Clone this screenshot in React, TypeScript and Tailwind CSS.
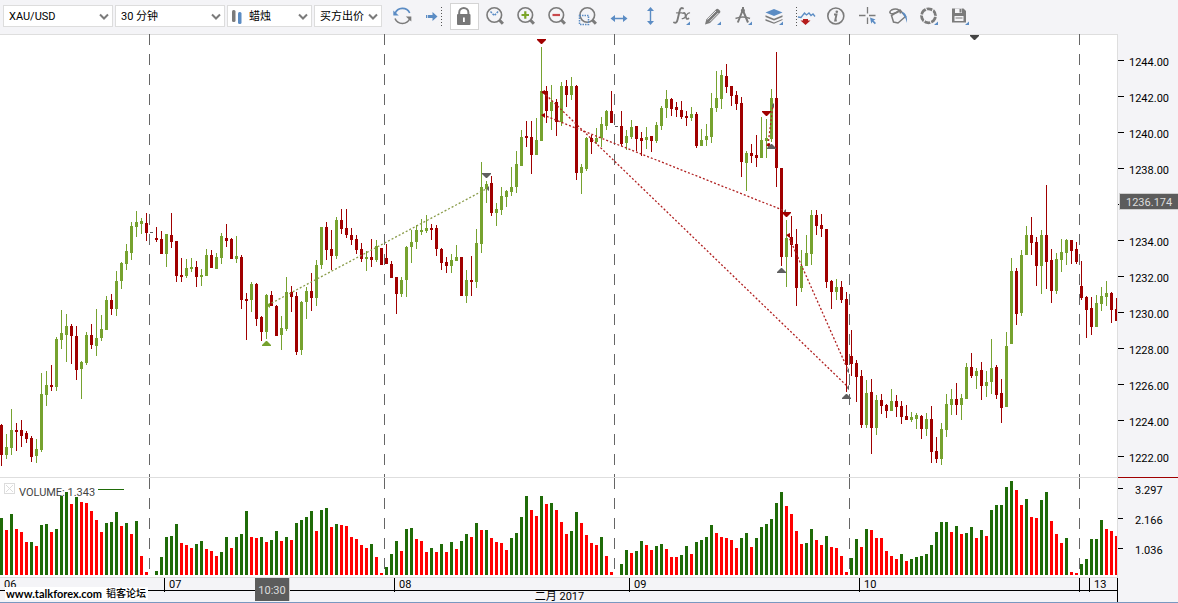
import React from "react";

/* One entry per bar: direction, then high, body top, body bottom and low as plot ordinates. "-" is a gap. */
const CANDLES = `
r424,425,455,466 g434,447,455,459 g409,430,448,455 r423,430,432,451 r420,430,436,447 r431,433,439,443 r436,438,457,462 g439,449,456,463 g373,394,450,452 g371,385,395,406
r365,385,387,391 g337,339,387,391 g310,333,340,349 g314,326,335,362 r324,326,336,364 r326,336,370,380 g361,362,369,399 g332,335,363,365 r324,335,345,349 g309,338,346,356
g315,329,338,341 g296,300,330,330 r294,300,309,315 g271,281,309,316 g262,263,281,289 g244,251,264,270 g222,226,253,260 g211,222,227,237 g218,221,224,234 r213,223,233,241
- r227,238,240,242 r231,239,254,254 g234,234,254,267 r213,235,242,248 r241,241,276,282 r258,275,277,282 g259,268,276,278 g258,267,269,272 r261,267,277,287
g269,275,277,286 g249,255,276,276 r250,255,268,268 g253,257,269,269 g233,236,258,264 r224,238,241,247 r238,239,259,259 g236,256,259,263 r255,257,300,309 r293,299,301,340
g282,284,300,312 r283,284,319,326 r316,317,332,341 g294,295,332,339 r291,295,306,306 r305,306,336,336 g316,328,335,350 g277,292,329,331 r286,292,297,312 r292,296,352,355
g301,302,350,355 g287,291,302,319 r273,291,298,311 g260,265,298,306 g227,227,265,269 r222,227,250,260 r230,249,256,270 g217,220,256,259 r209,220,229,234 r209,228,235,238
r228,235,240,245 r235,239,250,254 r243,249,259,262 g251,257,259,271 r239,257,260,267 g240,246,260,262 r248,248,265,265 r244,258,264,264 r261,264,278,278 r277,277,294,314
g277,280,294,297 g246,247,280,297 g230,242,247,263 g225,230,242,249 g219,230,232,235 g215,228,231,233 r224,228,230,240 r225,228,249,256 r248,249,263,270 r257,262,266,273
g254,260,266,273 g245,257,261,261 r257,257,296,296 g270,280,296,303 r256,280,282,296 g229,243,282,288 g162,187,244,253 g181,184,189,203 r176,183,213,216 g203,209,213,226
g187,196,210,215 g190,191,197,207 g167,187,192,196 g151,164,187,193 g130,137,166,166 r121,136,138,147 r121,137,155,174 g118,140,155,155 g47,91,141,141 r86,91,111,123
g85,102,111,130 r99,102,122,136 g82,86,122,126 r80,86,95,107 g77,86,95,100 r85,86,173,180 g164,167,173,194 g137,138,169,171 r135,138,142,154 g128,138,142,144
g117,124,138,147 g110,111,126,130 r91,111,123,123 - r111,126,144,146 g130,136,143,150 g120,127,137,139 r126,126,139,151 r132,138,141,156 g127,137,140,149
r136,136,141,152 g122,125,141,143 g106,108,126,130 g90,99,108,118 r98,99,109,116 r102,107,110,117 r101,110,117,119 r111,116,118,126 g107,114,118,121 r112,114,146,148
g129,140,146,146 g124,136,140,146 g93,108,137,143 g71,98,108,112 g70,75,99,109 r64,76,87,93 r86,86,96,106 r91,95,104,110 r97,103,162,177 g151,153,163,191
r144,153,156,163 r135,155,158,167 g117,140,158,158 g119,138,141,158 g89,98,139,142 r52,98,168,187 r168,168,257,266 g220,238,257,287 r216,237,245,257 r229,244,288,306
g250,266,288,292 g235,253,266,266 g210,215,254,265 r210,215,226,235 r214,225,229,237 r229,229,282,288 r280,281,292,309 g279,287,292,300 r281,287,300,303 r292,299,365,392
r330,356,364,376 r360,363,377,402 r370,376,425,428 g380,393,425,428 r379,392,428,454 g395,400,428,435 r394,400,406,414 r404,405,411,418 g389,401,411,411 r395,401,407,417
r401,406,417,424 r405,416,420,420 g412,417,420,422 g413,415,419,429 r415,416,429,439 g413,419,429,436 r406,419,452,463 r437,451,459,463 g423,429,459,465 g394,404,430,437
g389,399,405,415 r383,399,405,415 g394,398,405,420 g363,367,399,399 r353,367,376,378 g368,371,376,389 r362,370,386,400 g371,382,386,397 g339,368,382,394 r365,367,395,399
r379,393,408,423 g332,346,407,407 g258,271,344,344 r268,271,314,325 g250,255,313,316 g226,235,255,255 r217,235,243,255 r237,242,266,286 g230,235,266,294 r185,235,262,289
r249,260,291,303 g253,259,291,294 g239,252,260,272 g239,240,253,265 r240,240,251,264 r242,249,262,264 r261,286,298,300 r296,297,310,338 r297,308,327,335 g295,303,327,327
g287,296,304,311 g281,293,297,306 r292,293,310,323 r298,309,321,321`
  .trim()
  .split(/\s+/);

/* Volume bar heights, one per candle. */
const VOLUMES = `
g57 r45 g61 r46 r43 r33 g33 r29 g50 g51 r43 g46 g79 g83 r71 g78 r73 r72 r64 r55
r43 g52 g53 g63 r49 g52 r41 g54 r19 r3 - g4 g18 g38 g39 g51 r32 r30 r27 g31
g34 r26 r24 r19 g23 g38 r27 g38 g41 g64 r38 r37 g38 r33 g35 g44 r34 g38 r35 g52
g55 g58 g64 r44 g65 g67 r48 g51 r50 r49 r38 r36 r30 r27 g31 r18 r2 g8 g21 g34
r24 g46 g47 r36 r34 r23 g27 r23 g31 r23 g33 r26 g34 g41 r38 g52 r45 g45 r37 r33
r32 r25 g37 g42 g58 g79 r65 r59 g79 r71 g72 r65 r53 r41 g44 g63 r52 r40 r32 r30
g38 r19 r3 - g11 g25 r22 g24 g34 r30 r25 g29 g31 r26 r18 r18 g20 g29 r21 g33
g35 g38 g50 r42 r38 r37 r35 r27 g37 g42 r28 g37 g48 g51 g56 g72 g83 r69 r61 r44
r31 g32 g46 r35 r30 g39 r28 r27 r19 r3 g17 g36 r28 g46 r45 r37 r37 r24 r19 r16
g21 r14 g16 g18 g19 g21 g30 g43 g53 g53 r43 g49 r41 g42 g48 r37 g45 r39 g65 g70
g70 g88 g94 r85 r70 g76 r58 r57 g75 g83 r54 r41 r32 g37 r3 r2 g11 g16 g36 g36
g55 r46 r44 r39`
  .trim()
  .split(/\s+/);

const SESSIONS = [149, 384, 614, 849, 1079];
const GREEN = "#76a22f";
const RED = "#a00000";
const GRAY = "#5f5f5f";
const BLUE = "#5b8cc4";
const INK = "#7b7b7b";

type Mark = { x: number; y: number; up?: boolean; color: string };

const MARKS: Mark[] = [
  { x: 541, y: 39, color: RED },
  { x: 486, y: 173, color: GRAY },
  { x: 766, y: 111, color: RED },
  { x: 771, y: 144, up: true, color: GRAY },
  { x: 786, y: 212, color: RED },
  { x: 781, y: 268, up: true, color: GRAY },
  { x: 846, y: 394, up: true, color: GRAY },
  { x: 266, y: 341, up: true, color: GREEN },
  { x: 974, y: 35, color: "#444444" },
];

const TRADES = [
  { from: [268, 305], to: [488, 188], color: "#8a9c4a", start: GREEN },
  { from: [543, 92], to: [848, 387], color: "#b02020", start: RED },
  { from: [543, 115], to: [785, 211], color: "#b02020", start: RED },
  { from: [768, 145], to: [773, 105], color: "#b02020", start: RED },
  { from: [788, 235], to: [848, 370], color: "#b02020", start: RED },
];

function Sessions({ top, bottom }: { top: number; bottom: number }) {
  return (
    <g stroke="#666666" strokeDasharray="11 9" shapeRendering="crispEdges">
      {SESSIONS.map((x) => (
        <line key={x} x1={x + 0.5} x2={x + 0.5} y1={top} y2={bottom} />
      ))}
    </g>
  );
}

function PricePlot() {
  return (
    <svg className="block h-[443px] w-full" viewBox="0 34 1117 443" preserveAspectRatio="none" role="img" aria-label="XAU/USD">
      <rect x="0" y="34" width="1117" height="1" fill="#dedede" />
      <Sessions top={34} bottom={477} />
      <g shapeRendering="crispEdges">
        {CANDLES.map((c, i) => {
          if (c === "-") return null;
          const [hi, top, bottom, lo] = c.slice(1).split(",").map(Number);
          const fill = c[0] === "g" ? GREEN : RED;
          return (
            <g key={i} fill={fill}>
              <rect x={5 * i + 1} y={hi} width="1" height={lo - hi} />
              <rect x={5 * i} y={top} width="3" height={bottom - top} />
            </g>
          );
        })}
        <g fill={GRAY}>
          <rect x="150" y="232" width="3" height="1" />
          <rect x="615" y="126" width="3" height="1" />
          <rect x="850" y="398" width="1" height="1" />
        </g>
      </g>
      {TRADES.map((t, i) => (
        <g key={i}>
          <line x1={t.from[0]} y1={t.from[1]} x2={t.to[0]} y2={t.to[1]} stroke={t.color} strokeWidth="1.3" strokeDasharray="2 2" />
          <path d={`M${t.from[0] + 2} ${t.from[1] - 2}l-4 2l4 3z`} fill={t.start} />
          <path d={`M${t.to[0] + 1} ${t.to[1] - 2}v5q-4 -2 0 -5z`} fill={GRAY} />
        </g>
      ))}
      {MARKS.map((m) => (
        <path
          key={`${m.x}-${m.y}`}
          fill={m.color}
          d={m.up ? `M${m.x - 4} ${m.y + 5}h9v-1l-4 -4h-1l-4 4z` : `M${m.x - 4} ${m.y}h9v1l-4 4h-1l-4 -4z`}
        />
      ))}
    </svg>
  );
}

function VolumePlot() {
  return (
    <svg className="block h-[99px] w-full" viewBox="0 478 1117 99" preserveAspectRatio="none" role="img" aria-label="VOLUME">
      <Sessions top={478} bottom={575} />
      <g shapeRendering="crispEdges">
        {VOLUMES.map((v, i) => {
          if (v === "-") return null;
          const h = Number(v.slice(1));
          return <rect key={i} x={5 * i} y={575 - h} width="3" height={h} fill={v[0] === "g" ? "#1f6b08" : "#ff0000"} />;
        })}
      </g>
    </svg>
  );
}

function Picker({ label, value, className, selectClass, children }: { label: string; value: string; className: string; selectClass: string; children?: React.ReactNode }) {
  return (
    <label className={`relative block h-[22px] ${className}`}>
      <select aria-label={label} defaultValue={value} className={`block h-full w-full appearance-none border border-[#dddddd] bg-white pt-0.5 text-[11px] leading-4 text-black outline-none ${selectClass}`}>
        <option>{value}</option>
      </select>
      {children}
      <svg className="pointer-events-none absolute top-2 right-1 h-2 w-2.5" viewBox="0 0 10 8" fill="none" stroke={INK} strokeWidth="2">
        <path d="M1 1.5l4 4l4 -4" />
      </svg>
    </label>
  );
}

const corner = <path d="M24 21.5v3.5h-4z" fill={BLUE} />;

function Lens({ x = 14.3 }: { x?: number }) {
  return (
    <g fill="none" stroke={INK}>
      <circle cx={x} cy="15" r="7.3" strokeWidth="1.6" />
      <path d={`M${x + 5} 20l3.6 3.8`} strokeWidth="3" />
    </g>
  );
}

const TOOLS: { label: string; pressed?: boolean; art: React.ReactNode }[] = [
  {
    label: "Refresh",
    art: (
      <g fill="none" strokeWidth="1.6">
        <path d="M8 13.5A8 8 0 0 1 22.7 13" stroke={BLUE} />
        <path d="M6.3 10.5v5h5.5z" fill={BLUE} />
        <path d="M22.8 18.5A8 8 0 0 1 8 18.5" stroke={INK} />
        <path d="M24.3 21.5v-5h-5.5z" fill={INK} />
      </g>
    ),
  },
  {
    label: "Shift to end",
    art: (
      <g>
        <path d="M8 15h1v3H8zM9.700 15h4.800v-3l5 4.500l-5 4.500v-3H9.700z" fill={BLUE} />
        <path d="M23.5 7v19" stroke="#555" strokeDasharray="1 2" />
      </g>
    ),
  },
  {
    label: "Lock",
    pressed: true,
    art: (
      <g>
        <path d="M10.2 15v-2.500a4.600 4.600 0 0 1 9.200 0V15" fill="none" stroke={INK} strokeWidth="2" />
        <rect x="8" y="14" width="13.500" height="11" rx="1" fill="#777" />
        <path d="M14 17.500h1.800v4.500h-1.800z" fill="#fff" />
      </g>
    ),
  },
  { label: "Zoom by time", art: (<g><Lens /><path d="M10.500 11.500l3.800 4l3.800 -4" fill="none" stroke={BLUE} strokeWidth="1.500" strokeDasharray="2 1" /></g>) },
  { label: "Zoom in", art: (<g><Lens /><path d="M10.500 15h7.500M14.300 11.200v7.500" stroke="#7ba428" strokeWidth="2.200" /></g>) },
  { label: "Zoom out", art: (<g><Lens /><path d="M10.500 15h7.500" stroke="#c8484c" strokeWidth="2.200" /></g>) },
  { label: "Zoom area", art: (<g><Lens /><rect x="6.500" y="15.500" width="9" height="9" fill="none" stroke={BLUE} strokeWidth="1.500" strokeDasharray="1.500 1" /></g>) },
  { label: "Fit width", art: (<path d="M6.500 18.500l4.500 -3.500v2.800h8V15l4.500 3.500l-4.500 3.500v-2.800h-8V22z" fill={BLUE} />) },
  { label: "Fit height", art: (<path d="M15.500 7l3.500 4h-2.800v10H19l-3.500 4l-3.500 -4h2.800V11H12z" fill={BLUE} />) },
  {
    label: "Indicators",
    art: (
      <g>
        <g fill="none" stroke={INK} strokeLinecap="round">
          <path d="M8 22.500c2 1 3 -.5 3.600 -3l2 -8.500c.5 -2.500 1.700 -3.500 3.400 -2.700" strokeWidth="1.900" />
          <path d="M10.500 12.800h5.500" strokeWidth="1.300" />
          <path d="M17 13.200c2.500 -1 2.300 1.500 2.800 3.500s1 3 2.700 1.800" strokeWidth="1.700" />
          <path d="M23.500 12.800c-2 -.3 -2.600 1.700 -3.700 3.300s-1.800 3 -3.600 2.500" strokeWidth="1.300" />
        </g>
        {corner}
      </g>
    ),
  },
  {
    label: "Draw",
    art: (
      <g>
        <path d="M8 24.500l1.300 -5L19.500 9q1 -.8 2 .2l1.500 1.500q.8 1 0 2L13 23z" fill={INK} />
        <path d="M10.500 19.500L19 11M12.800 21.500L21.300 13" stroke="#f4f4f7" strokeWidth=".9" />
        {corner}
      </g>
    ),
  },
  {
    label: "Measure",
    art: (
      <g>
        <path d="M15 7v3M14.800 10L9.800 22.500M14.800 10l5.200 12.500" fill="none" stroke={INK} strokeWidth="2" />
        <path d="M7.500 18.500q7.500 -3 14.500 0" fill="none" stroke={INK} strokeWidth="1.400" />
        <circle cx="14.900" cy="10.500" r="2" fill={INK} />
        {corner}
      </g>
    ),
  },
  {
    label: "Layers",
    art: (
      <g>
        <path d="M6.500 12.500L15 9l8.500 3.500L15 16z" fill={BLUE} />
        <path d="M6.500 15.200L15 18.700l8.500 -3.500v1.900L15 20.600l-8.500 -3.500z" fill={INK} />
        <path d="M6.500 19L15 22.500L23.500 19v1L15 23.800L6.500 20.700z" fill={INK} />
        {corner}
      </g>
    ),
  },
  {
    label: "Positions",
    art: (
      <g>
        <path d="M6.500 7v19" stroke="#555" strokeDasharray="1 2" />
        <path d="M8 17l3 .5l3.500 -4.500l2 2l2.500 -2l2 2.500l2 -1.500l2 2.500" fill="none" stroke={BLUE} strokeWidth="1.300" />
        <path d="M10.500 20.500h2.500V19h5v1.500h2.500L15.500 25z" fill="#b51c1c" />
      </g>
    ),
  },
  {
    label: "Info",
    art: (
      <g>
        <circle cx="14.800" cy="16" r="8" fill="none" stroke={INK} strokeWidth="1.600" />
        <circle cx="15.800" cy="11.800" r="1.300" fill={INK} />
        <path d="M13 14.500h2.500l-1.300 6h1.600" fill="none" stroke={INK} strokeWidth="1.900" />
      </g>
    ),
  },
  {
    label: "Crosshair",
    art: (
      <g>
        <path d="M7 15.500h6.500M17 15.500h6.500M15.500 7v6.500M15.500 17.500V24" stroke={INK} strokeWidth="1.300" />
        <path d="M18 17.500l5.500 2l-2 1l2.500 2.500l-1.200 1.200l-2.500 -2.500l-1 2z" fill={BLUE} />
      </g>
    ),
  },
  {
    label: "Colours",
    art: (
      <g fill="none" stroke={INK} strokeWidth="1.500">
        <path d="M8.500 15.500l8.500 -5.500l5.500 6.500l-7.500 6.500l-4.500 -1z" />
        <path d="M17.500 13.500c-.5 -4.500 -5 -5.500 -9 -3.500c-3 2 -1.500 4.500 2 3.500l5 -1.500" />
        <path d="M18.500 12c4 0 6 4 5.500 11c-1 -3.500 -1.500 -5 -2.500 -6.500z" fill={BLUE} stroke="none" />
      </g>
    ),
  },
  {
    label: "Theme",
    art: (
      <g>
        <circle cx="14.500" cy="15.800" r="7" fill="none" stroke={INK} strokeWidth="2.800" />
        <path d="M11 7l2.500 4.500M19.500 8.500l-2 4.500M23.500 16.500l-5 -.5M17.500 24l-2 -4.500M9.500 22.500l2 -4M5.500 14.500l5 1" stroke="#f4f4f7" strokeWidth="1.100" />
        {corner}
      </g>
    ),
  },
  {
    label: "Save",
    art: (
      <g>
        <path d="M7 8.500h11.500l2.500 2.500v11.500H7z" fill={INK} />
        <path d="M10 8.500h7v4.500h-7zM9.500 16h9v5h-9z" fill="#f4f4f7" />
        <path d="M14.500 9h2v3.500h-2zM10.500 17.500h7v.9h-7z" fill={INK} />
        {corner}
      </g>
    ),
  },
];

function Toolbar() {
  return (
    <header className="flex h-[34px] items-start pl-[3px]">
      <div className="flex gap-0.5 pt-[5px]">
        <Picker label="Instrument" value="XAU/USD" className="w-[110px]" selectClass="pl-[5px]" />
        <Picker label="Period" value="30 分钟" className="w-[110px]" selectClass="pl-[5px]" />
        <Picker label="Chart type" value="蜡烛" className="w-[85px]" selectClass="pl-[21px]">
          <svg className="pointer-events-none absolute top-1 left-1 h-[15px] w-3" viewBox="0 0 12 15">
            <rect x="1" y="1" width="3.500" height="12" rx="1.500" fill={INK} />
            <rect x="7" y="3" width="3.500" height="12" rx="1.500" fill={BLUE} />
          </svg>
        </Picker>
        <Picker label="Price side" value="买方出价" className="w-[68px]" selectClass="pl-[5px]" />
      </div>
      <div className="flex pl-[5px]">
        {TOOLS.map((t) => (
          <button key={t.label} type="button" aria-label={t.label} aria-pressed={t.pressed} className="h-[34px] w-[31px]">
            <svg className="block h-[34px] w-[31px]" viewBox="0 0 31 34">
              {t.pressed && <rect x="1.500" y="3.500" width="28" height="26" fill="#fff" stroke="#d4d4d4" />}
              {t.art}
            </svg>
          </button>
        ))}
      </div>
    </header>
  );
}

const PRICES = ["1244.00", "1242.00", "1240.00", "1238.00", "", "1234.00", "1232.00", "1230.00", "1228.00", "1226.00", "1224.00", "1222.00"];

function PriceAxis() {
  return (
    <div className="w-[60px] shrink-0 pt-[9px]">
      {PRICES.map((p) =>
        p ? (
          <div key={p} className="flex h-9 items-center">
            <span className="mb-px h-px w-1.5 bg-black" />
            <span className="pt-1 pl-[5px] leading-[14px]">{p}</span>
          </div>
        ) : (
          <div key="current" className="flex h-9 items-start pt-1.5">
            <span className="mt-[11px] h-px w-px bg-black" />
            <span className="h-[17px] flex-1 border-y border-l border-[#d0d0d0] bg-[#5c5c5c] pl-1.5 leading-[18px] text-[#dddddd]">1236.174</span>
          </div>
        ),
      )}
    </div>
  );
}

export default function App() {
  return (
    <div className="overflow-hidden border-b border-[#7a98c0] bg-[#f4f4f7] font-[Roboto,'Noto_Sans_CJK_SC',sans-serif] text-[11px] text-black">
      <Toolbar />
      <main>
        <section className="flex">
          <div className="min-w-0 flex-1 border-r border-b border-[#dedede] bg-white">
            <PricePlot />
          </div>
          <div className="flex flex-col border-b border-[#a00000]">
            <PriceAxis />
          </div>
        </section>

        <section className="flex">
          <div className="relative min-w-0 flex-1 border-r border-b border-[#dedede] bg-white">
            <VolumePlot />
            <div className="absolute top-[5px] left-1 flex items-start text-[#444444]">
              <button type="button" aria-label="Remove VOLUME" className="h-[11px] w-[11px]">
                <svg className="block h-[11px] w-[11px]" viewBox="0 0 11 11" fill="none" stroke="#dcdcdc">
                  <rect x=".5" y=".5" width="10" height="10" />
                  <path d="M2 2l7 7M9 2l-7 7" />
                </svg>
              </button>
              <span className="pt-[3px] pl-1 leading-[14px]">VOLUME: 1.343</span>
              <span className="mt-1.5 ml-[3px] h-px w-[26px] bg-[#1f6b08]" />
            </div>
          </div>
          <div className="w-[60px] shrink-0">
            {["3.297", "2.166", "1.036"].map((v) => (
              <div key={v} className="flex h-[30px] items-start pt-[5px]">
                <span className="mt-[5px] h-px w-[5px] bg-black" />
                <span className="pt-px pl-3 leading-[14px]">{v}</span>
              </div>
            ))}
          </div>
        </section>

        <footer className="flex h-6">
          <div className="relative min-w-0 flex-1 border-r border-black">
            <div className="grid h-[13px] grid-cols-[164fr_230fr_235fr_230fr_220fr_10fr_28fr] border-b border-black leading-[14px]">
              <span className="min-w-0 pl-1">06</span>
              <span className="min-w-0 border-l border-black pl-1">07</span>
              <span className="min-w-0 border-l border-black pl-1">08</span>
              <span className="min-w-0 border-l border-black pl-1">09</span>
              <span className="min-w-0 border-l border-black pl-1">10</span>
              <span className="min-w-0 border-l border-black" />
              <span className="min-w-0 border-l border-black pl-1">13</span>
            </div>
            <div className="pl-0.5 text-center leading-[11px]">二月 2017</div>
            <div className="absolute top-0 left-[22.83%] h-[23px] w-[35px] border-r border-[#d0d0d0] bg-[#5c5c5c] text-center leading-[26px] text-[#dddddd]">10:30</div>
            <div className="absolute top-[9px] left-[5px] flex h-[13px] items-center gap-1 bg-white pr-0.5 pl-px leading-[13px] whitespace-nowrap">
              <span className="font-[Lato,sans-serif] text-[11px] font-bold">www.talkforex.com</span>
              <span className="text-[10px] font-medium">韬客论坛</span>
            </div>
          </div>
          <div className="w-[60px] shrink-0" />
        </footer>
      </main>
    </div>
  );
}
